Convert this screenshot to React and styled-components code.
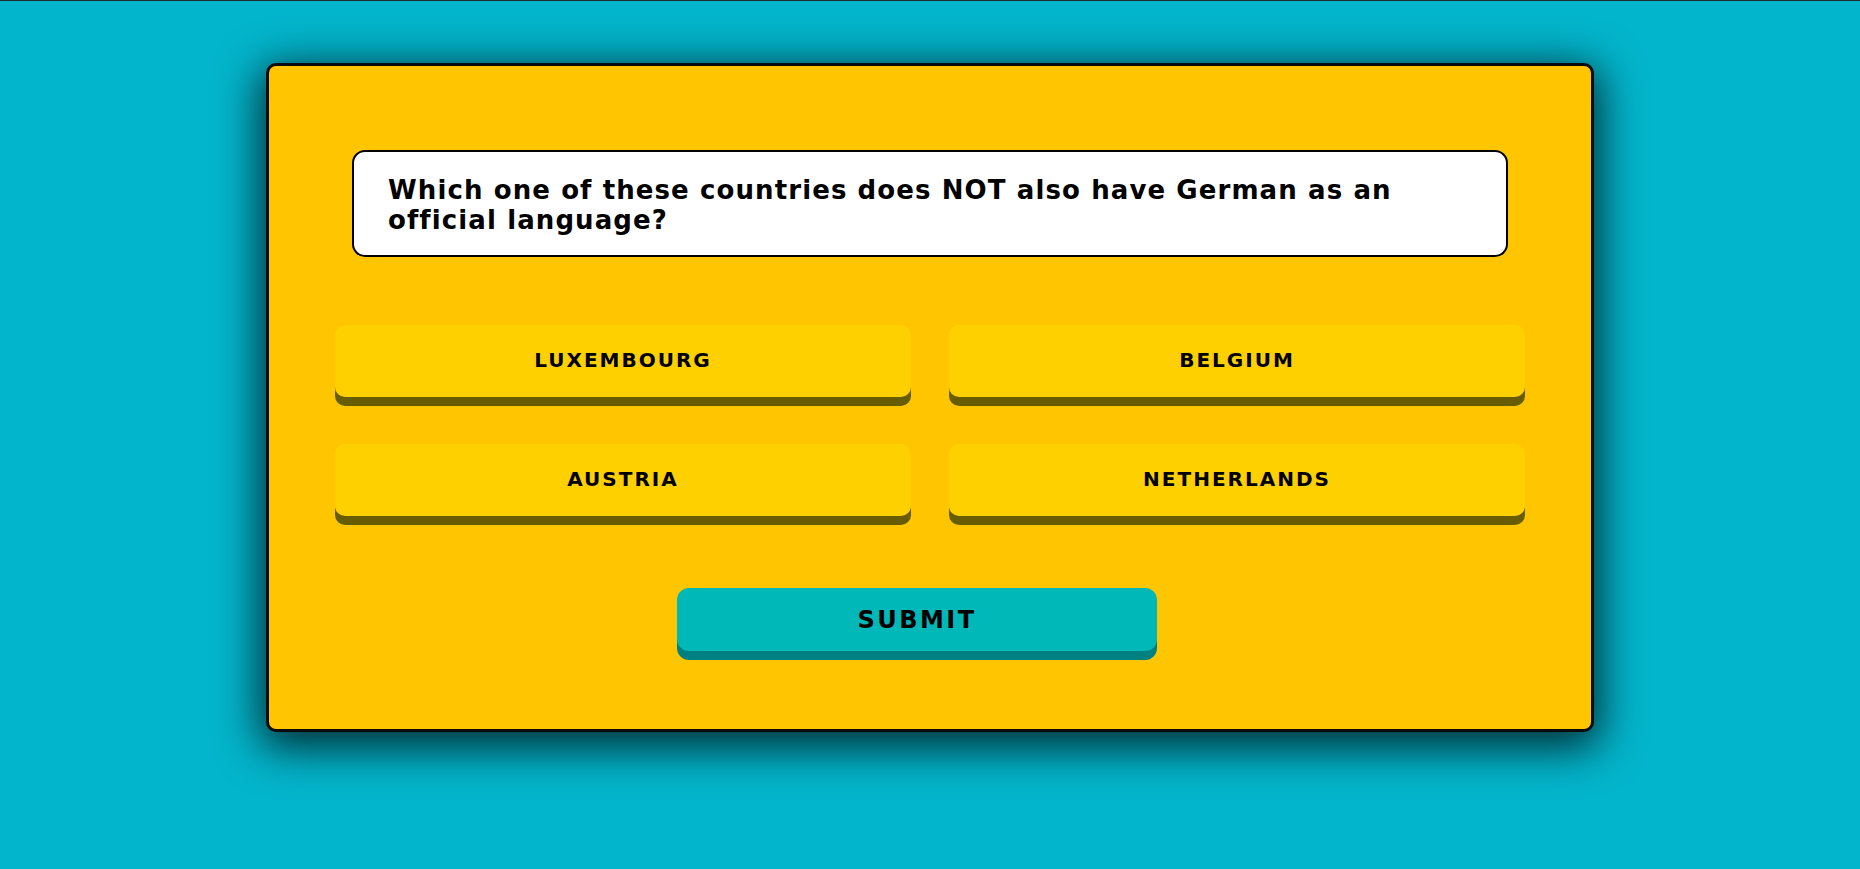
import styled, { createGlobalStyle } from 'styled-components';

const GlobalStyle = createGlobalStyle`
  html, body {
    margin: 0;
    padding: 0;
    background: #03b5cc;
    font-family: "DejaVu Sans", "Liberation Sans", sans-serif;
  }
  body {
    border-top: 1px solid #1d2a2c;
    min-height: 868px;
  }
`;

const answers = ['LUXEMBOURG', 'BELGIUM', 'AUSTRIA', 'NETHERLANDS'];

const Page = styled.div`
  display: flex;
  justify-content: center;
  padding-top: 62px;
`;

const Card = styled.div`
  box-sizing: border-box;
  width: 1328px;
  height: 669px;
  background: #ffc600;
  border: 3px solid #0b0b0b;
  border-radius: 10px;
  box-shadow: 0 10px 44px 6px rgba(0, 0, 0, 0.75);
  display: flex;
  flex-direction: column;
  align-items: center;
  padding-top: 84px;
`;

const Question = styled.div`
  box-sizing: border-box;
  width: 1156px;
  height: 107px;
  background: #fff;
  border: 2px solid #000;
  border-radius: 13px;
  padding: 23px 34px 20px;
  font-weight: bold;
  font-size: 26px;
  letter-spacing: 1.1px;
  line-height: 30px;
  color: #000;
`;

const AnswerGrid = styled.div`
  display: grid;
  grid-template-columns: 576px 576px;
  column-gap: 38px;
  row-gap: 47px;
  margin-top: 68px;
`;

const AnswerButton = styled.button`
  height: 72px;
  padding: 0 0 3px;
  border: none;
  border-radius: 10px;
  background: #ffd000;
  box-shadow: 0 9px 0 #675d00;
  font-family: "DejaVu Sans", sans-serif;
  font-weight: bold;
  font-size: 20px;
  letter-spacing: 2px;
  color: #000;
  cursor: pointer;
`;

const SubmitRow = styled.div`
  margin-top: 72px;
  padding-right: 26px;
`;

const SubmitButton = styled.button`
  width: 480px;
  height: 63px;
  border: none;
  border-radius: 12px;
  background: #00b8b8;
  box-shadow: 0 9px 0 #008080;
  font-family: "DejaVu Sans", sans-serif;
  font-weight: bold;
  font-size: 24px;
  letter-spacing: 2.5px;
  color: #000;
  cursor: pointer;
`;

export default function App() {
  return (
    <>
      <GlobalStyle />
      <Page>
        <Card>
          <Question>
            Which one of these countries does NOT also have German as an official language?
          </Question>
          <AnswerGrid>
            {answers.map((a) => (
              <AnswerButton key={a}>{a}</AnswerButton>
            ))}
          </AnswerGrid>
          <SubmitRow>
            <SubmitButton>SUBMIT</SubmitButton>
          </SubmitRow>
        </Card>
      </Page>
    </>
  );
}
